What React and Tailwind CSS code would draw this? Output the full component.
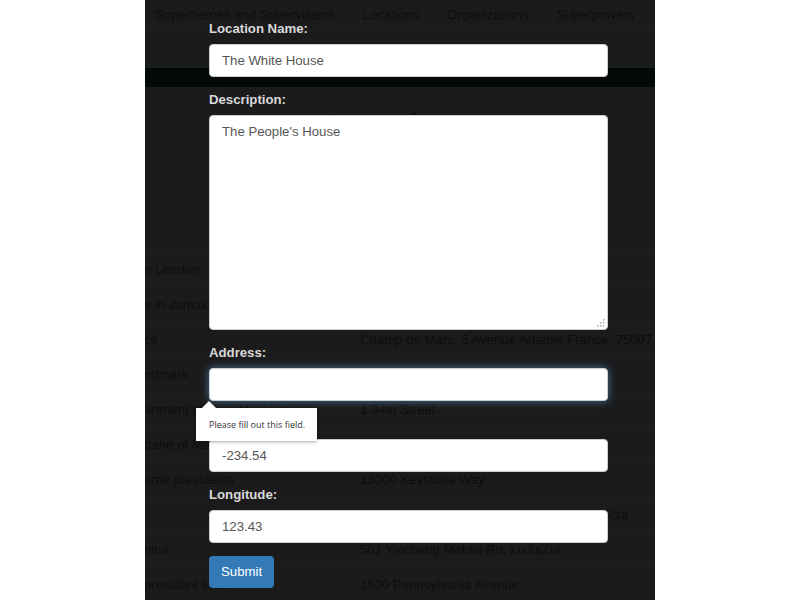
/**
 * Location form modal shown over the Locations page.
 */

const tabs = ['Superheroes and Supervillains', 'Locations', 'Organizations', 'Superpowers'];

const rows = [
  ['n London', ''],
  ['e in Jamaica', ''],
  ['ce', 'Champ de Mars, 5 Avenue Anatole France, 75007 Paris'],
  ['ndmark', ''],
  ['artment store in New York', '1 34th Street'],
  ['bane of Metropolis', ''],
  ['ome presidents', '13000 Keystone Way'],
  ['', 'Al Haram, Nazlet El-Semman, Al Haram, Giza'],
  ['hina', '501 Yincheng Middle Rd, LuJiaZui'],
  ['president lives', '1600 Pennsylvania Avenue'],
];

function Field({ label, children }) {
  return (
    <div className="mb-[13px]">
      <label className="block font-bold text-[13.2px] leading-[20px] mb-[5px] text-[#d9d9d9]">{label}</label>
      {children}
    </div>
  );
}

const inputClass =
  'block w-full h-[33px] px-3 rounded bg-white border border-[#cccccc] text-[13.2px] text-[#555555] outline-none';

export default function App() {
  return (
    <div className="min-h-screen bg-white flex justify-center" style={{ fontFamily: '"Liberation Sans", Arial, sans-serif' }}>
      <div className="relative w-[510px] h-[600px] overflow-hidden bg-[#1b1b1c] text-[#0d0d0e] text-[13.2px]">
        {/* Page behind the overlay */}
        <div className="flex h-[31px] items-center gap-[28px] pl-[10px] border-b border-[#1f1f21]">
          {tabs.map(t => (
            <span key={t} className="whitespace-nowrap">{t}</span>
          ))}
        </div>
        <div className="mt-[37px] h-[19px] bg-[#030a05]" />
        <div className="mt-[18px] text-center text-[34px] leading-[40px]">Locations</div>

        <div className="mt-[107px]">
          {rows.map(([a, b], i) => (
            <div key={i} className="flex h-[35px] items-center border-t border-[#1f1f21] whitespace-nowrap">
              <span className="w-[215px] shrink-0 -ml-px">{a}</span>
              <span className="pl-px">{b}</span>
            </div>
          ))}
        </div>

        {/* Modal form */}
        <form className="absolute top-0 left-[64px] w-[399px] pt-[19px]" onSubmit={e => e.preventDefault()}>
          <Field label="Location Name:">
            <input className={inputClass} defaultValue="The White House" />
          </Field>
          <Field label="Description:">
            <div className="relative">
              <textarea
                className="block w-full h-[215px] px-3 py-[6px] rounded bg-white border border-[#cccccc] text-[13.2px] leading-[19px] text-[#555555] outline-none resize-none"
                defaultValue="The People's House"
              />
              {/* resize grip */}
              <svg className="absolute right-[3px] bottom-[3px]" width="8" height="8" viewBox="0 0 8 8">
                <rect x="6" y="0" width="1.5" height="1.5" fill="#a8a8a8" />
                <rect x="3" y="3" width="1.5" height="1.5" fill="#a8a8a8" />
                <rect x="6" y="3" width="1.5" height="1.5" fill="#a8a8a8" />
                <rect x="0" y="6" width="1.5" height="1.5" fill="#a8a8a8" />
                <rect x="3" y="6" width="1.5" height="1.5" fill="#a8a8a8" />
                <rect x="6" y="6" width="1.5" height="1.5" fill="#a8a8a8" />
              </svg>
            </div>
          </Field>
          <Field label="Address:">
            <input className={`${inputClass} border-[#66afe9] shadow-[0_0_8px_rgba(102,175,233,0.6)]`} defaultValue="" />
          </Field>
          <Field label="Latitude:">
            <input className={inputClass} defaultValue="-234.54" />
          </Field>
          <Field label="Longitude:">
            <input className={inputClass} defaultValue="123.43" />
          </Field>
          <button type="submit" className="h-[32px] px-3 rounded bg-[#337ab7] text-white text-[13.2px]">
            Submit
          </button>
        </form>

        {/* Validation bubble */}
        <div className="absolute left-[51px] top-[408px] w-[121px] h-[33px] bg-white shadow-[0_1px_3px_rgba(0,0,0,0.35)] flex items-center pl-[13px]">
          <svg className="absolute left-[3px] -top-[8px]" width="18" height="9" viewBox="0 0 18 9">
            <path d="M2 9 L10 1 L18 9 Z" fill="#ffffff" />
          </svg>
          <span className="text-[9px] text-[#333333] whitespace-nowrap" style={{ fontFamily: '"Open Sans", sans-serif' }}>
            Please fill out this field.
          </span>
        </div>
      </div>
    </div>
  );
}
